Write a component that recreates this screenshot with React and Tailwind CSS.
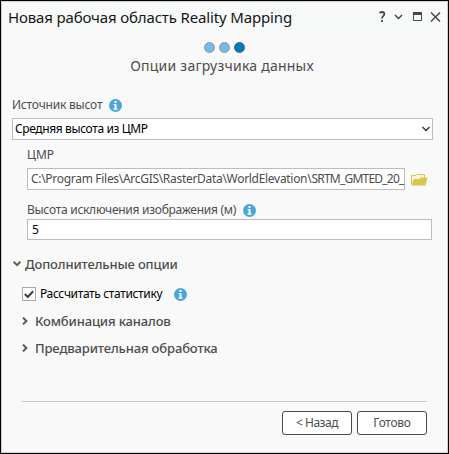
import { useState } from 'react';

function InfoIcon() {
    return (
        <svg width="13" height="13" viewBox="0 0 13 13" className="shrink-0">
            <circle cx="6.5" cy="6.5" r="6.5" fill="#4ba6dc" />
            <path d="M5.5 2h2v2h-2zM4.6 5h2.9v4.6h1v1.1H4.5V9.600h1V6h-.9z" fill="#fff" />
        </svg>
    );
}

function Chevron({ open }) {
    return (
        <svg width="8" height="8" viewBox="0 0 8 8" fill="none" stroke="#5a5a5a" strokeWidth="2" className="shrink-0">
            <path d={open ? 'M.6 1.800 4 5.200 7.400 1.800' : 'M2 .6 5.400 4 2 7.400'} />
        </svg>
    );
}

function FolderIcon() {
    return (
        <svg width="17" height="13" viewBox="0 0 17 13" className="shrink-0">
            <path d="M.5 11.500V2.500h4.500L6 1.500h7.500V5" fill="#f8f4d8" stroke="#d8c44d" />
            <path d="M2.800 6H8.500l1.300-1.500h6.700L14.500 12.500H.5z" fill="#dac54c" />
        </svg>
    );
}

const groups = [
    { title: 'Комбинация каналов' },
    { title: 'Предварительная обработка' },
];

export default function App() {
    const [stats, setStats] = useState(true);
    const [height, setHeight] = useState('5');

    return (
        <div className="flex h-[454px] w-[449px] flex-col overflow-hidden border border-black bg-[#f9f9f9] font-['Noto_Sans',sans-serif] text-[12px] leading-4 whitespace-nowrap text-[#4c4c4c]">
            <div className="flex h-full flex-col border border-[#cfcfcf]">
                {/* Title bar */}
                <header className="flex h-[30px] items-center justify-between bg-[#f8faf9] pr-[6px] pl-[6px]">
                    <h1 className="text-[15px] leading-5 tracking-[-0.15px] text-[#151515]">Новая рабочая область Reality Mapping</h1>
                    <div className="flex h-4 items-center">
                        <svg width="64" height="14" viewBox="0 0 64 14" fill="none" stroke="#484848" strokeWidth="1.500">
                            <path d="M2.700 3.300C3.200 1.600 7.300 1.300 7.300 4c0 2.200-2.300 2-2.300 4.500M5 10v2" strokeWidth="1.800" />
                            <path d="m18 5 3.500 3.500L25 5" />
                            <path d="M36.500 2.500h8v8h-8z" strokeWidth="1" />
                            <path d="M36 3.500h9" strokeWidth="3" />
                            <path d="m54 2.500 9 9m0-9-9 9" />
                        </svg>
                    </div>
                </header>

                {/* Wizard steps */}
                <div className="mt-2 flex h-[14px] items-center justify-center gap-1">
                    <span className="size-[11px] rounded-full border border-[#8e9ba3] bg-[#76b9e6]" />
                    <span className="size-[11px] rounded-full border border-[#8e9ba3] bg-[#76b9e6]" />
                    <span className="size-[11px] rounded-full border border-[#4b6a80] bg-[#0079c1]" />
                </div>
                <h2 className="mt-[2px] h-5 pr-[5px] text-center text-[14px] leading-5 tracking-[0.23px]">Опции загрузчика данных</h2>

                <div className="flex flex-col pr-[14px] pl-[10px]">
                    <div className="mt-[21px] flex h-4 items-center gap-[7px]">
                        <span className="tracking-[-0.2px]">Источник высот</span>
                        <InfoIcon />
                    </div>
                    <button className="mt-[5px] flex h-[22px] items-center justify-between border border-[#bcbcbe] bg-white pr-[2px] pl-[2px] text-black">
                        <span className="tracking-[-0.38px]">Средняя высота из ЦМР</span>
                        <svg width="8" height="6" viewBox="0 0 8 6" fill="none" stroke="#333" strokeWidth="1.400">
                            <path d="m.5 1 3.500 3.500L7.500 1" />
                        </svg>
                    </button>

                    <div className="flex flex-col pl-[15px]">
                        <label className="mt-[7px] h-4">ЦМР</label>
                        <div className="mt-[5px] flex items-center gap-[6px]">
                            <div className="h-[22px] w-[378px] border border-[#bcbcbe] bg-white pl-[3px] leading-5 tracking-[-0.3px]">
                                C:\Program Files\ArcGIS\RasterData\WorldElevation\
                                <span className="tracking-[-0.78px]">SRTM_GMTED_20_</span>
                            </div>
                            <FolderIcon />
                        </div>
                        <div className="mt-3 flex h-4 items-center gap-[7px]">
                            <label className="tracking-[-0.27px]">Высота исключения изображения (м)</label>
                            <InfoIcon />
                        </div>
                        <input
                            value={height}
                            onChange={(e) => setHeight(e.target.value)}
                            className="mt-[1px] h-[21px] w-[405px] border border-[#bcbcbe] bg-white px-1 text-black"
                        />
                    </div>
                </div>

                {/* Advanced options */}
                <section className="flex flex-col pl-[11px]">
                    <div className="mt-4 flex h-4 items-center gap-1 text-[13px] font-medium tracking-[-0.14px]">
                        <Chevron open />
                        <span>Дополнительные опции</span>
                    </div>
                    <div className="mt-[14px] flex h-4 items-center pl-[9px] text-black">
                        <button onClick={() => setStats(!stats)} className="mr-1 flex size-[14px] items-center justify-center border border-[#a9a9a9] bg-white">
                            {stats && (
                                <svg width="10" height="9" viewBox="0 0 10 9" fill="none" stroke="#404040" strokeWidth="2">
                                    <path d="m.8 4 3 3L9.200 1.200" />
                                </svg>
                            )}
                        </button>
                        <span className="w-[134px] tracking-[-0.36px]">Рассчитать статистику</span>
                        <InfoIcon />
                    </div>
                    <div className="mt-[11px] flex flex-col gap-[11px] pl-[8px] text-[13px] font-medium tracking-[-0.14px]">
                        {groups.map((group) => (
                            <div key={group.title} className="flex h-4 items-center gap-[6px]">
                                <Chevron />
                                <span>{group.title}</span>
                            </div>
                        ))}
                    </div>
                </section>

                <footer className="mt-auto mr-5 mb-[17px] ml-5 flex justify-end gap-[5px] border-t border-[#c8c8c8] pt-[9px]">
                    <button className="h-6 w-[70px] rounded-[3px] border border-[#4c4c4c] bg-white tracking-[-0.5px]">&lt; Назад</button>
                    <button className="h-6 w-[70px] rounded-[3px] border border-[#4c4c4c] bg-white tracking-[-0.3px]">Готово</button>
                </footer>
            </div>
        </div>
    );
}
